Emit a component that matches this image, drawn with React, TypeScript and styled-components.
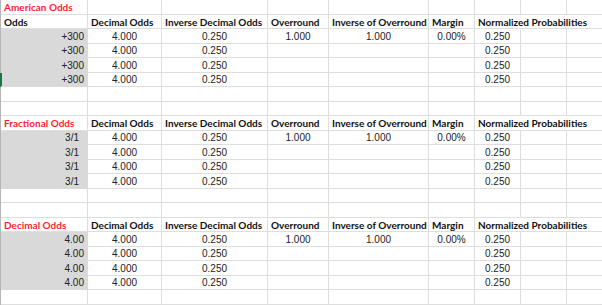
import React from "react";
import styled, { createGlobalStyle, css } from "styled-components";

const GlobalStyle = createGlobalStyle`
  html, body {
    margin: 0;
    background: #fff;
    overflow: hidden;
  }
`;

const Sheet = styled.div`
  display: grid;
  grid-template-columns: 87px 74px 106px 61px 100px 46px 46px 46px 46px;
  grid-auto-rows: 14.5px;
  width: max-content;
  border-left: 1px solid #b6b6b6;
`;

type Align = "left" | "center" | "right";
type Tone = "title" | "head" | "data";

const Cell = styled.div<{
  $align?: Align;
  $tone?: Tone;
  $fill?: boolean;
  $span?: number;
  $inset?: number;
  $marked?: boolean;
}>`
  box-sizing: border-box;
  display: flex;
  align-items: center;
  justify-content: ${(p) =>
    p.$align === "right" ? "flex-end" : p.$align === "center" ? "center" : "flex-start"};
  padding: 1px ${(p) => p.$inset ?? 3}px 0 3px;
  border-right: 1px solid #dedede;
  border-bottom: 1px solid #dedede;
  white-space: nowrap;
  overflow: visible;
  grid-column: span ${(p) => p.$span ?? 1};
  font-family: "Liberation Sans", Arial, sans-serif;
  font-size: 10px;
  color: #222;
  ${(p) =>
    p.$tone === "head" &&
    css`
      font-family: Lato, "Liberation Sans", sans-serif;
      font-weight: 700;
      color: #111;
    `}
  ${(p) =>
    p.$tone === "title" &&
    css`
      font-family: Lato, "Liberation Sans", sans-serif;
      font-weight: 700;
      color: #ff1f2f;
    `}
  ${(p) =>
    p.$fill &&
    css`
      background: #d9d9d9;
      border-color: #d9d9d9;
    `}
  ${(p) =>
    p.$marked &&
    css`
      box-shadow: -1px 0 0 #217346, inset 1px 0 0 #217346;
    `}
`;

const COLS = 9;
const headers = [
  "Decimal Odds",
  "Inverse Decimal Odds",
  "Overround",
  "Inverse of Overround",
  "Margin",
];

type Section = {
  title: string;
  label: string;
  odds: string;
  inset?: number;
  gapAfter: number;
};

const sections: Section[] = [
  { title: "American Odds", label: "Odds", odds: "+300", gapAfter: 2 },
  { title: "Fractional Odds", label: "Fractional Odds", odds: "3/1", inset: 8, gapAfter: 2 },
  { title: "Decimal Odds", label: "Decimal Odds", odds: "4.00", gapAfter: 1 },
];

const EmptyRow = () => (
  <>
    {Array.from({ length: COLS }).map((_, i) => (
      <Cell key={i} />
    ))}
  </>
);

const HeaderRow = ({ label, red }: { label: string; red: boolean }) => (
  <>
    <Cell $tone={red ? "title" : "head"}>{label}</Cell>
    {headers.map((h) => (
      <Cell key={h} $tone="head">
        {h}
      </Cell>
    ))}
    <Cell $tone="head" $span={3}>
      Normalized Probabilities
    </Cell>
  </>
);

const DataRow = ({ s, first, marked }: { s: Section; first: boolean; marked: boolean }) => (
  <>
    <Cell $fill $align="right" $inset={s.inset} $marked={marked}>
      {s.odds}
    </Cell>
    <Cell $align="center">4.000</Cell>
    <Cell $align="center">0.250</Cell>
    <Cell $align="center">{first ? "1.000" : ""}</Cell>
    <Cell $align="center">{first ? "1.000" : ""}</Cell>
    <Cell $align="center">{first ? "0.00%" : ""}</Cell>
    <Cell $align="center">0.250</Cell>
    <Cell />
    <Cell />
  </>
);

const App = () => {
  return (
    <>
      <GlobalStyle />
      <Sheet>
        {sections.map((s, si) => (
          <React.Fragment key={s.title}>
            {si === 0 && (
              <>
                <Cell $tone="title">{s.title}</Cell>
                {Array.from({ length: COLS - 1 }).map((_, i) => (
                  <Cell key={i} />
                ))}
              </>
            )}
            <HeaderRow label={s.label} red={si !== 0} />
            {[0, 1, 2, 3].map((r) => (
              <DataRow key={r} s={s} first={r === 0} marked={si === 0 && r === 3} />
            ))}
            {Array.from({ length: s.gapAfter }).map((_, i) => (
              <EmptyRow key={i} />
            ))}
          </React.Fragment>
        ))}
      </Sheet>
    </>
  );
};

export default App;
